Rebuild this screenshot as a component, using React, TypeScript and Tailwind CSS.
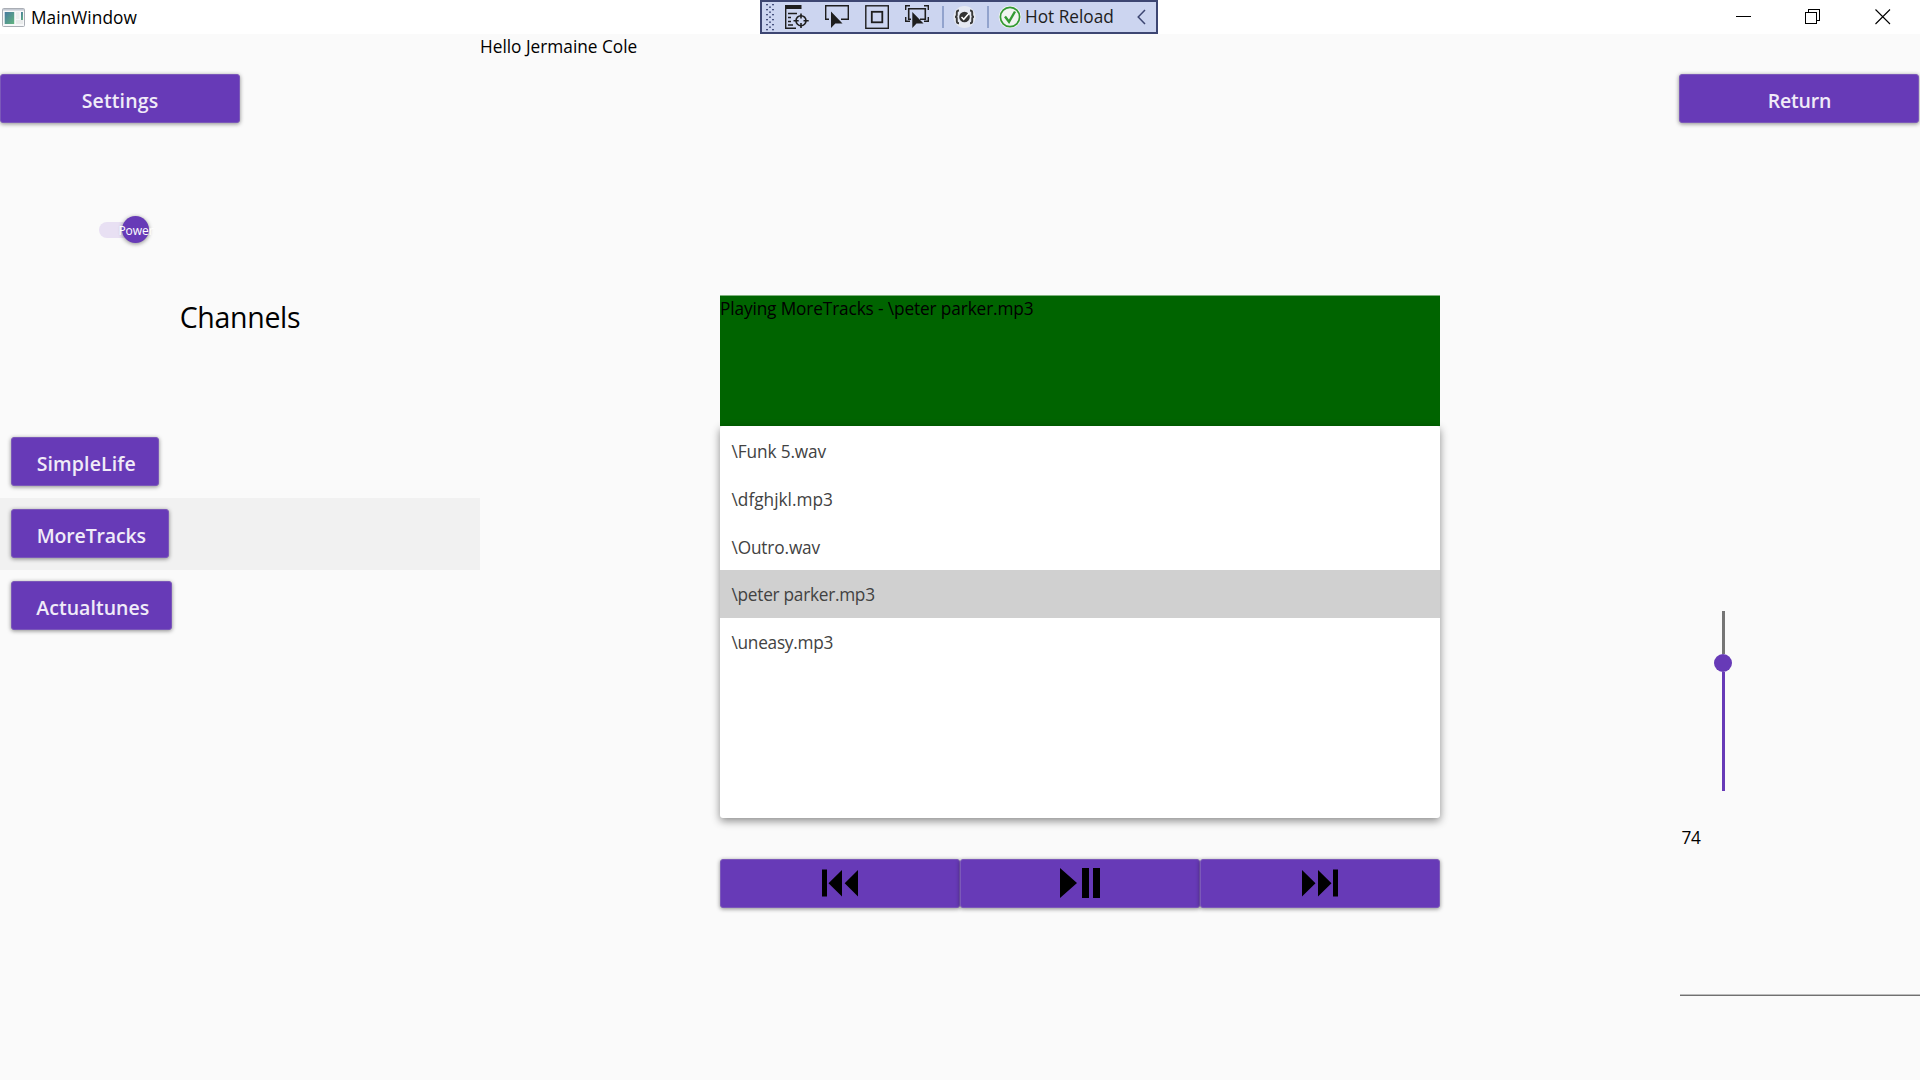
import type { ReactNode } from "react";

function RaisedButton({ children, className = "" }: { children: ReactNode; className?: string }) {
  return (
    <button
      className={`flex h-[48.5px] shrink-0 items-center justify-center rounded-[3px] border border-[#7b58b9] bg-[#673ab7] text-[19.5px] leading-6 font-semibold whitespace-nowrap text-[#f0ebf8] shadow-[0_1px_4px_rgba(0,0,0,0.45)] ${className}`}
    >
      {children}
    </button>
  );
}

function AppIcon() {
  return (
    <svg className="ml-0.5 h-[19px] w-[23px]" viewBox="0 0 23 19">
      <defs>
        <linearGradient id="pane" x1="0" y1="0" x2="1" y2="1">
          <stop offset="0" stopColor="#4779a0" />
          <stop offset="1" stopColor="#62b57e" />
        </linearGradient>
      </defs>
      <rect x="0.5" y="0.5" width="22" height="18" rx="1" fill="#f7f8f9" stroke="#a9adb4" />
      <rect x="1" y="1" width="21" height="1.6" fill="#c5cad3" />
      <rect x="2.7" y="4" width="9.5" height="12" fill="url(#pane)" />
      <rect x="14" y="4" width="3.4" height="7" fill="#eceeee" />
      <rect x="14" y="12" width="7" height="4" fill="#e9ebeb" />
      <rect x="19" y="4" width="2" height="8" fill="url(#pane)" />
    </svg>
  );
}

const gripRows = [4, 9, 14, 19, 24];

function DebugToolbar() {
  return (
    <div className="flex h-[34px] w-[398px] items-center border-2 border-[#3d4672] bg-[#ccd5f0]">
      <svg className="h-[30px] w-[214px] shrink-0" viewBox="762 2 214 30">
        {gripRows.map((y) => (
          <g key={y} fill="#46507d">
            <rect x="766" y={y} width="2" height="1.3" />
            <rect x="772" y={y} width="2" height="1.3" />
            <rect x="769" y={y + 2.5} width="2" height="1.3" />
          </g>
        ))}
        <rect x="766" y="29" width="2" height="1.3" fill="#46507d" />
        <rect x="772" y="29" width="2" height="1.3" fill="#46507d" />
        <g fill="none" stroke="#1e1e1e" strokeWidth="1.4">
          <path d="M785.7 8V28.3H796" />
          <path d="M788 13.5H797M788 17.5H791M788 21.5H791M788 25H793" />
          <circle cx="801" cy="20.7" r="5" strokeWidth="1.6" />
          <path d="M801 13.5V18.5M801 23V28M793.5 20.7H798.7M803.5 20.7H808.7" strokeWidth="1.6" />
          <path d="M829 19.3H825.7V5.7H848.3V19.3H841" />
          <rect x="865.8" y="5.8" width="22.5" height="22.5" />
          <rect x="871.8" y="11.8" width="10.5" height="10.5" strokeWidth="1.8" />
          <path d="M911 19.3H908.7V8.7H925.3V19.3H920" strokeWidth="1.6" />
          <path d="M905.7 10V5.7H910M924 5.7H928.3V10M928.3 17V21.3H924M905.7 17V21.3H910" />
        </g>
        <rect x="785" y="5" width="16.5" height="4" fill="#1e1e1e" />
        <path d="M831 11.5V28L835.3 23.6H842.5Z" fill="#1e1e1e" />
        <path d="M912.3 12V28L916.5 23.6H923.5Z" fill="#1e1e1e" />
        <rect x="942" y="6" width="2" height="22" fill="#92a3cd" />
        <circle cx="964.5" cy="17" r="11" fill="#e6e9f2" />
        <g fill="none" stroke="#3a3a3a" strokeWidth="1.9">
          <path d="M959 10.5Q956.8 10.5 956.8 12.5V15Q956.8 16.8 955 16.8Q956.8 16.8 956.8 18.6V21.2Q956.8 23.2 959 23.2" />
          <path d="M970 10.5Q972.2 10.5 972.2 12.5V15Q972.2 16.8 974 16.8Q972.2 16.8 972.2 18.6V21.2Q972.2 23.2 970 23.2" />
        </g>
        <circle cx="964.5" cy="17" r="5.3" fill="#333" />
        <path d="M961.5 17L963.7 19.3L969.3 13" fill="none" stroke="#fff" strokeWidth="1.5" />
      </svg>
      <svg className="h-[30px] w-[48px] shrink-0" viewBox="976 2 48 30">
        <rect x="987" y="6" width="2" height="22" fill="#92a3cd" />
        <circle cx="1010" cy="17" r="11.2" fill="#f1f4f1" />
        <circle cx="1010" cy="17" r="9.6" fill="none" stroke="#339a33" strokeWidth="1.7" />
        <path d="M1005 16.5L1009 21.8L1015 11.5" fill="none" stroke="#339a33" strokeWidth="2.4" />
      </svg>
      <span className="ml-px w-[100px] text-[17.25px] leading-6 tracking-[-0.02px] whitespace-nowrap text-[#1e1e1e]">Hot Reload</span>
      <svg className="ml-3 h-4 w-[9px]" viewBox="0 0 9 16">
        <path d="M8 1L1.2 8L8 15" fill="none" stroke="#3d4672" strokeWidth="1.5" />
      </svg>
    </div>
  );
}

function TitleBar() {
  return (
    <header className="flex h-[34px] bg-white text-black">
      <div className="flex w-[760px] items-center">
        <AppIcon />
        <span className="ml-1.5 pt-0.5 text-[17.25px] leading-6 tracking-[0.07px]">MainWindow</span>
      </div>
      <DebugToolbar />
      <div className="ml-auto flex items-center gap-[54px] pr-7">
        <svg className="-ml-px mr-px h-4 w-[15px]" viewBox="0 0 15 16" shapeRendering="crispEdges">
          <path d="M0 7.5H15" stroke="#000" />
        </svg>
        <svg className="-ml-px mr-px h-4 w-4" viewBox="0 0 16 16" fill="none" stroke="#000" shapeRendering="crispEdges">
          <rect x="0.5" y="3.5" width="11" height="11" />
          <path d="M3.5 3V0.5H14.5V11.5H12" />
        </svg>
        <svg className="-ml-px mr-px h-4 w-4" viewBox="0 0 16 16">
          <path d="M0.5 0.5L15 15M15 0.5L0.5 15" stroke="#000" strokeWidth="1.1" />
        </svg>
      </div>
    </header>
  );
}

const channels = [
  { name: "SimpleLife", row: "", button: "w-[148px] tracking-[0.13px]" },
  { name: "MoreTracks", row: "bg-[#f1f1f1]", button: "w-[158px] tracking-[-0.13px]" },
  { name: "Actualtunes", row: "", button: "w-[161px] tracking-[0.02px]" },
];

const tracks = [
  { name: "\\Funk 5.wav", style: "pt-[3px] tracking-[-0.12px]" },
  { name: "\\dfghjkl.mp3", style: "pt-[3px]" },
  { name: "\\Outro.wav", style: "pt-[3px] tracking-[-0.15px]" },
  { name: "\\peter parker.mp3", style: "bg-[#d0d0d0] pt-px tracking-[-0.27px]" },
  { name: "\\uneasy.mp3", style: "pt-px tracking-[-0.27px]" },
];

function Sidebar() {
  return (
    <aside className="flex w-[480px] flex-col">
      <RaisedButton className="mt-[40.3px] w-60 pt-[5px] tracking-[0.15px]">Settings</RaisedButton>
      <div className="mt-[93.4px] ml-[99px] flex h-[27px] items-center">
        <div className="h-4 w-9 rounded-l-lg bg-[#e8e0f3]" />
        <div className="-ml-[13px] flex size-[27px] items-center justify-center rounded-full bg-[#673ab7] pt-[3px] text-[12px] leading-4 text-white shadow-[0_1px_4px_rgba(0,0,0,0.45)]">
          <span className="pl-px tracking-[-0.05px]">Power</span>
        </div>
      </div>
      <h1 className="mt-[53.6px] w-[480px] text-center text-[28.5px] leading-10 tracking-[-0.3px] text-black">Channels</h1>
      <ul className="mt-[89px]">
        {channels.map((c) => (
          <li key={c.name} className={`flex h-[72px] items-center pb-px pl-[11.3px] ${c.row}`}>
            <RaisedButton className={`pt-[5px] pl-0.5 ${c.button}`}>{c.name}</RaisedButton>
          </li>
        ))}
      </ul>
    </aside>
  );
}

function Player() {
  return (
    <section className="flex w-[1200px] flex-col">
      <p className="h-[261px] pt-px text-[17.25px] leading-6 text-black">Hello Jermaine Cole</p>
      <div className="ml-60 flex w-[720px] flex-col">
        <div className="h-[131px] border-t border-[#7fb27e] bg-[#006400] pt-px text-[17.25px] leading-6 tracking-[-0.13px] text-black">
          Playing MoreTracks - \peter parker.mp3
        </div>
        <ul className="h-[392px] rounded-[3px] bg-white text-[17.25px] leading-6 text-[#424242] shadow-[0_3px_8px_rgba(0,0,0,0.45)]">
          {tracks.map((t) => (
            <li key={t.name} className={`flex h-12 items-center pl-[11.5px] ${t.style}`}>
              {t.name}
            </li>
          ))}
        </ul>
        <div className="mt-[41.3px] flex">
          <RaisedButton className="w-60 pb-px">
            <svg className="h-7 w-[37px]" viewBox="822 869.5 37 28">
              <path d="M822 870H827V897H822ZM842 870.5V897L828.5 883.7ZM858 870.5V897L844.7 883.7Z" />
            </svg>
          </RaisedButton>
          <RaisedButton className="w-60 pb-px">
            <svg className="h-[30px] w-10" viewBox="1060 869 40 30">
              <path d="M1060 869L1077 884L1060 899ZM1082 869H1089V899H1082ZM1093 869H1100V899H1093Z" />
            </svg>
          </RaisedButton>
          <RaisedButton className="w-60 pb-px">
            <svg className="h-7 w-[37px]" viewBox="1302 869.5 37 28">
              <path d="M1302 870.5L1315.5 883.7L1302 897ZM1318 870.5L1331.5 883.7L1318 897ZM1333 870H1338V897H1333Z" />
            </svg>
          </RaisedButton>
        </div>
      </div>
    </section>
  );
}

function VolumePanel() {
  return (
    <aside className="flex w-60 flex-col">
      <RaisedButton className="-ml-[0.6px] mt-[40.3px] w-60 pt-[5px] tracking-[-0.2px]">Return</RaisedButton>
      <div className="mt-[488.2px] ml-[34px] flex h-[180px] w-[18px] flex-col items-center">
        <div className="ml-px h-[43px] w-[3px] bg-[#757575]" />
        <div className="size-[18px] shrink-0 rounded-full bg-[#673ab7]" />
        <div className="ml-px h-[119px] w-[3px] bg-[#673ab7]" />
      </div>
      <span className="mt-[35px] ml-[1.5px] text-[17.25px] leading-6 tracking-[-0.4px] text-black">74</span>
      <div className="mt-36 h-0.5 border-t border-b border-t-[#bdbdbd] border-b-[#707070]" />
    </aside>
  );
}

export default function App() {
  return (
    <div className="flex h-[1080px] w-[1920px] flex-col overflow-hidden bg-[#fafafa] font-['Open_Sans',sans-serif]">
      <TitleBar />
      <main className="flex flex-1">
        <Sidebar />
        <Player />
        <VolumePanel />
      </main>
    </div>
  );
}
